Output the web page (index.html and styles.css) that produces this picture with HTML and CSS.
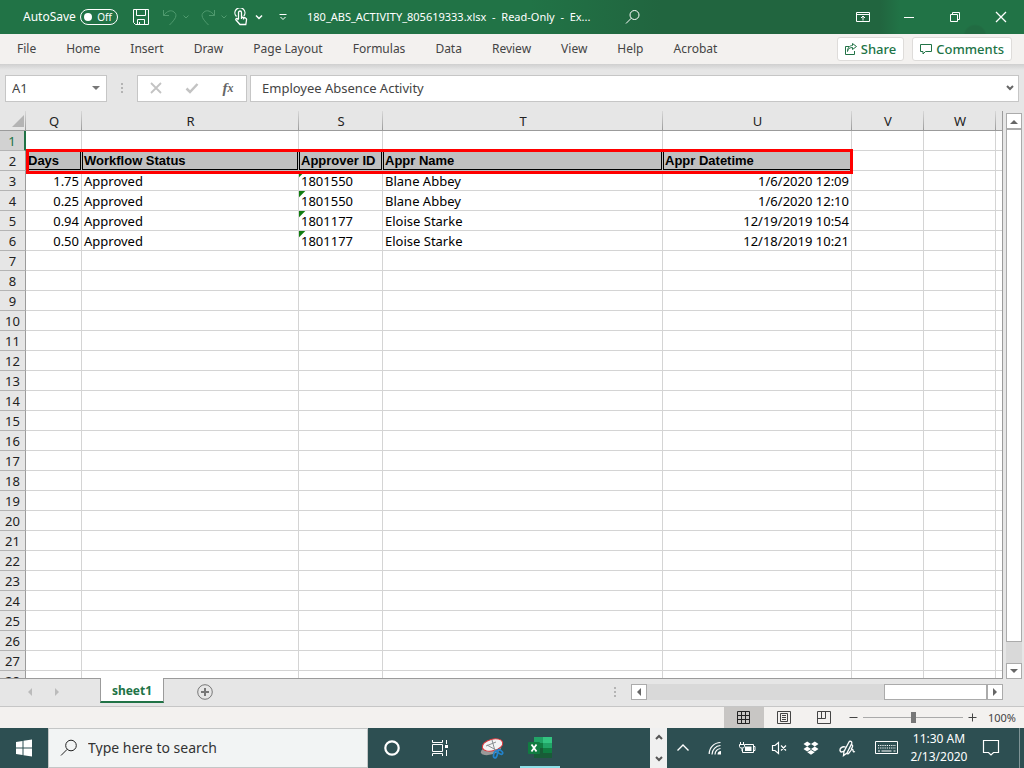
FILE: index.html
```html
<!DOCTYPE html>
<html lang="en">
<head>
<meta charset="utf-8">
<title>180_ABS_ACTIVITY_805619333.xlsx - Read-Only - Excel</title>
<link rel="stylesheet" href="styles.css">
</head>
<body>
<header class="titlebar">
  <span class="autosave-label" id="autosave">AutoSave</span>
  <button class="toggle" role="switch" aria-checked="false" aria-labelledby="autosave"><span class="knob"></span>Off</button>
  <div class="quick">
    <button aria-label="Save"><svg width="18" height="18" viewBox="0 0 18 18"><path d="M1.5 1.5h15v15h-13l-2-2zM4.500 1.500v6h9v-6M5.500 16.500v-5h7v5M7.500 16v-2"/></svg></button>
    <button class="dim" aria-label="Undo"><svg width="16" height="18" viewBox="0 0 16 18"><path d="M1.500 2v5.500h5.500M1.500 7.500C5 3 9 1.500 12 4c4 3 1.500 7-4.500 13"/></svg></button>
    <button class="dim" aria-label="Undo options"><svg width="8" height="6" viewBox="0 0 8 6"><path d="M1.500 1.500L4 4l2.500-2.500"/></svg></button>
    <button class="dim redo" aria-label="Redo"><svg width="16" height="18" viewBox="0 0 16 18"><path d="M14.500 2v5.500H9M14.500 7.500C11 3 7 1.500 4 4c-4 3-1.500 7 4.500 13"/></svg></button>
    <button class="dim" aria-label="Redo options"><svg width="8" height="6" viewBox="0 0 8 6"><path d="M1.500 1.500L4 4l2.500-2.500"/></svg></button>
    <button class="touch" aria-label="Touch mode"><svg width="14" height="18" viewBox="0 0 14 18"><path d="M4.500 11V4.500a1.500 1.500 0 0 1 3 0V9l4 1c1 .3 1.200 1 1 2l-.7 4.500H6L2 12c-.8-1 .6-2 1.500-1.200L4.500 12M2.500 8.500A5 5 0 1 1 9.800 8M9.500 9.500v2M7.500 9v2" stroke-width="1.300"/></svg></button>
    <button class="touch-more" aria-label="Touch mode options"><svg width="8" height="6" viewBox="0 0 8 6"><path d="M1 1.500l3 3 3-3" stroke-width="1.500"/></svg></button>
    <button class="customize" aria-label="Customize toolbar"><svg width="10" height="8" viewBox="0 0 10 8"><path d="M1.500 1.500h7M2.500 4L5 6.500 7.500 4"/></svg></button>
  </div>
  <h1 class="doc">180_ABS_ACTIVITY_805619333.xlsx&nbsp; -&nbsp; Read-Only&nbsp; -&nbsp; Ex...</h1>
  <button class="find" aria-label="Search"><svg width="16" height="16" viewBox="0 0 16 16"><circle cx="9.500" cy="6" r="4.500"/><path d="M6.300 9.200L1 14.500"/></svg></button>
  <div class="window-buttons">
    <button aria-label="Ribbon display options"><svg width="14" height="12" viewBox="0 0 14 12"><path d="M.5 1.500h13v9H.5zM.5 3.500h13M7 9.500V5M5 7l2-2 2 2"/></svg></button>
    <button aria-label="Minimize"><svg width="12" height="12" viewBox="0 0 12 12"><path d="M1 6.500h10"/></svg></button>
    <button aria-label="Restore"><svg width="12" height="12" viewBox="0 0 12 12"><path d="M1.500 3.500h7v7h-7zM3.500 3.500v-2h7v7h-2"/></svg></button>
    <button aria-label="Close"><svg width="12" height="12" viewBox="0 0 12 12"><path d="M1 1l10 10M11 1L1 11" stroke-width="1.300"/></svg></button>
  </div>
</header>

<nav class="ribbon">
  <div class="tabs">
    <button>File</button><button>Home</button><button>Insert</button><button>Draw</button><button>Page Layout</button><button>Formulas</button><button>Data</button><button>Review</button><button>View</button><button>Help</button><button>Acrobat</button>
  </div>
  <button class="action"><svg width="12" height="12" viewBox="0 0 12 12"><path d="M4 3.500H.5v8h9V8M2.500 8.500C3 5.500 5 4.500 7.500 4.500V6.500l4-3-4-3v2C4.500 2.500 2.500 5 2.500 8.500z"/></svg>Share</button>
  <button class="action"><svg width="12" height="12" viewBox="0 0 12 12"><path d="M.5 1.500h11v7h-6l-2.500 2.500V8.500H.5z"/></svg>Comments</button>
</nav>

<section class="formula">
  <div class="namebox"><select aria-label="Name box"><option>A1</option></select><span class="caret"></span></div>
  <svg class="grip" width="4" height="14" viewBox="0 0 4 14"><path d="M1 2h2v2H1zM1 6h2v2H1zM1 10h2v2H1z"/></svg>
  <div class="fx">
    <button aria-label="Cancel"><svg width="14" height="14" viewBox="0 0 14 14"><path d="M2 2l10 10M12 2L2 12" stroke="#c3c3c3" stroke-width="1.800"/></svg></button>
    <button aria-label="Enter"><svg width="14" height="14" viewBox="0 0 14 14"><path d="M1.500 7.500L5 11l7.500-8" stroke="#c3c3c3" stroke-width="2.500"/></svg></button>
    <button class="fn" aria-label="Insert function">f<small>x</small></button>
  </div>
  <div class="entry"><input type="text" value="Employee Absence Activity" aria-label="Formula bar"><svg width="8" height="6" viewBox="0 0 8 6"><path d="M1 1l3 3 3-3" stroke="#666" stroke-width="2"/></svg></div>
</section>

<main class="workspace">
  <div class="sheet" id="sheet">
    <table>
      <colgroup><col class="c-num"><col class="c-q"><col class="c-r"><col class="c-s"><col class="c-t"><col class="c-u"><col class="c-v"><col class="c-v"><col></colgroup>
      <thead><tr><th class="corner"><span></span></th><th>Q</th><th>R</th><th>S</th><th>T</th><th>U</th><th>V</th><th>W</th><th></th></tr></thead>
      <tbody id="rows">
        <tr class="current"><th>1</th><td></td><td></td><td></td><td></td><td></td><td></td><td></td><td></td></tr>
        <tr class="heads"><th>2</th><td>Days</td><td>Workflow Status</td><td>Approver ID</td><td>Appr Name</td><td>Appr Datetime</td><td></td><td></td><td></td></tr>
        <tr><th>3</th><td class="n">1.75</td><td>Approved</td><td class="flag">1801550</td><td>Blane Abbey</td><td class="n">1/6/2020 12:09</td><td></td><td></td><td></td></tr>
        <tr><th>4</th><td class="n">0.25</td><td>Approved</td><td class="flag">1801550</td><td>Blane Abbey</td><td class="n">1/6/2020 12:10</td><td></td><td></td><td></td></tr>
        <tr><th>5</th><td class="n">0.94</td><td>Approved</td><td class="flag">1801177</td><td>Eloise Starke</td><td class="n">12/19/2019 10:54</td><td></td><td></td><td></td></tr>
        <tr><th>6</th><td class="n">0.50</td><td>Approved</td><td class="flag">1801177</td><td>Eloise Starke</td><td class="n">12/18/2019 10:21</td><td></td><td></td><td></td></tr>
      </tbody>
    </table>
    <div class="highlight"></div>
  </div>
  <div class="vscroll">
    <button aria-label="Scroll up"><svg width="8" height="5" viewBox="0 0 8 5"><path d="M0 5l4-4 4 4z"/></svg></button>
    <div class="vtrack"><div class="vthumb"></div></div>
    <button aria-label="Scroll down"><svg width="8" height="5" viewBox="0 0 8 5"><path d="M0 0l4 4 4-4z"/></svg></button>
  </div>
</main>

<section class="sheetbar">
  <div class="sheetnav">
    <button aria-label="Previous sheet"><svg width="5" height="8" viewBox="0 0 5 8"><path d="M5 0L1 4l4 4z"/></svg></button>
    <button aria-label="Next sheet"><svg width="5" height="8" viewBox="0 0 5 8"><path d="M0 0l4 4-4 4z"/></svg></button>
  </div>
  <button class="sheettab">sheet1</button>
  <button class="add" aria-label="New sheet"><svg width="16" height="16" viewBox="0 0 16 16"><circle cx="8" cy="8" r="7.300" stroke="#777"/><path d="M8 4v8M4 8h8" stroke="#777" stroke-width="2"/></svg></button>
  <svg class="grip hgrip" width="4" height="14" viewBox="0 0 4 14"><path d="M1 2h2v2H1zM1 6h2v2H1zM1 10h2v2H1z"/></svg>
  <div class="hscroll">
    <button aria-label="Scroll left"><svg width="5" height="8" viewBox="0 0 5 8"><path d="M5 0L1 4l4 4z"/></svg></button>
    <div class="htrack"><div class="hthumb"></div></div>
    <button aria-label="Scroll right"><svg width="5" height="8" viewBox="0 0 5 8"><path d="M0 0l4 4-4 4z"/></svg></button>
  </div>
</section>

<footer class="status">
  <button class="on" aria-label="Normal view"><svg width="14" height="14" viewBox="0 0 14 14"><path d="M.5.500h12v12H.5zM4.500.500v12M8.500.500v12M.5 4.500h12M.5 8.500h12" stroke="#222"/></svg></button>
  <button aria-label="Page layout view"><svg width="14" height="14" viewBox="0 0 14 14"><path d="M.5.500h13v12H.5zM3.500 2.500h7v8h-7zM5 4.500h4M5 6.500h4M5 8.500h4"/></svg></button>
  <button aria-label="Page break view"><svg width="14" height="14" viewBox="0 0 14 14"><path d="M.5.500h13v12H.5zM4.500.500v7M.5 7.500h8V.5"/></svg></button>
  <button class="step" aria-label="Zoom out"><svg width="9" height="9" viewBox="0 0 9 9"><path d="M.5 4.500h8"/></svg></button>
  <input type="range" min="0" max="200" value="100" aria-label="Zoom">
  <button class="step" aria-label="Zoom in"><svg width="9" height="9" viewBox="0 0 9 9"><path d="M.5 4.500h8M4.500.500v8"/></svg></button>
  <span class="percent">100%</span>
</footer>

<footer class="taskbar">
  <button class="start" aria-label="Start"><svg width="18" height="18" viewBox="0 0 18 18"><path d="M1 3l6.500-1v6.500H1zM8.500 1.800L17 .5v8H8.500zM1 9.500h6.500V16L1 15zM8.500 9.500H17v8l-8.500-1.300z"/></svg></button>
  <label class="search"><svg width="18" height="18" viewBox="0 0 18 18"><circle cx="11" cy="6.500" r="5.300"/><path d="M7.200 10.300L1 16.500"/></svg><input type="text" placeholder="Type here to search" aria-label="Type here to search"></label>
  <div class="apps">
    <button aria-label="Cortana"><svg width="18" height="18" viewBox="0 0 18 18"><circle cx="9" cy="9" r="6.700" stroke-width="2.200"/></svg></button>
    <button aria-label="Task view"><svg width="18" height="18" viewBox="0 0 18 18"><path d="M1.500 1v2.500h10V1M1.500 17v-2.500h10V17M1.500 5.500h10v7h-10zM15.500 1v4M15.500 11v6"/><path d="M14 6h3v3h-3z" fill="#fff" stroke="none"/></svg></button>
    <button class="snip" aria-label="Snipping tool"><svg width="24" height="24" viewBox="0 0 24 24"><ellipse cx="11" cy="14" rx="10.500" ry="4.500" transform="rotate(-15 11 14)" fill="#999" stroke="none"/><ellipse cx="12.500" cy="9" rx="10.500" ry="5.800" transform="rotate(-15 12.500 9)" fill="#f4f4f4" stroke="#d8373c"/><path d="M6 10l10-4M7 9l9 5M12 4l3 11" stroke="#8a8f93"/><g stroke="#2383cc" stroke-width="1.700"><ellipse cx="15.500" cy="18.500" rx="1.800" ry="3.500" transform="rotate(15 15.500 18.500)"/><ellipse cx="20" cy="16" rx="3" ry="1.700" transform="rotate(35 20 16)"/></g></svg></button>
    <button class="excel" aria-label="Excel"><svg width="24" height="22" viewBox="0 0 24 22"><g stroke="none"><path d="M6 0h9v6H6z" fill="#21a366"/><path d="M15 0h9v6h-9z" fill="#33c481"/><path d="M6 6h9v5H6z" fill="#107c41"/><path d="M15 6h9v5h-9z" fill="#21a366"/><path d="M6 11h9v5H6z" fill="#185c37"/><path d="M15 11h9v5h-9z" fill="#107c41"/><path d="M6 16h18v5H6z" fill="#185c37"/><rect y="5" width="12" height="12" rx="1" fill="#107c41"/></g><path d="M3.500 7.500l5 7M8.500 7.500l-5 7" stroke-width="1.800"/></svg></button>
  </div>
  <div class="tasknav">
    <button aria-label="Up"><svg width="8" height="6" viewBox="0 0 8 6"><path d="M1 5l3-3 3 3" stroke="#555" stroke-width="2"/></svg></button>
    <button aria-label="Down"><svg width="8" height="6" viewBox="0 0 8 6"><path d="M1 1l3 3 3-3" stroke="#555" stroke-width="2"/></svg></button>
  </div>
  <div class="tray">
    <button aria-label="Hidden icons"><svg width="14" height="14" viewBox="0 0 14 14"><path d="M1.500 9.500L7 4l5.500 5.500" stroke-width="1.400"/></svg></button>
    <button aria-label="Network"><svg width="14" height="14" viewBox="0 0 14 14"><path d="M1.200 13A11.500 11.500 0 0 1 12.500 1.500M4 13.500A9 9 0 0 1 12.500 4.500M7 13.500A6 6 0 0 1 12.500 7.500" stroke-width="1.200"/><path d="M9.500 13.500a3.500 3.500 0 0 1 3.500-3.500v3.500z" fill="#fff" stroke="none"/></svg></button>
    <button aria-label="Battery"><svg width="18" height="14" viewBox="0 0 18 14"><path d="M7 3.500h8.500v8H4.500V8M15.500 5.500h1.500v4h-1.500M2.500 1v2M5.500 1v2M1.500 3.500h5v2l-1 1.500h-3l-1-1.500zM4 7v3"/><path d="M7 5.500h6.500v4.500H7z" fill="#fff" stroke="none"/></svg></button>
    <button aria-label="Volume muted"><svg width="16" height="14" viewBox="0 0 16 14"><path d="M1.500 4.500H4l3.500-3v11L4 9.500H1.500zM10 4.500l5 5M15 4.500l-5 5" stroke-width="1.200"/></svg></button>
    <button class="fill" aria-label="Dropbox"><svg width="16" height="14" viewBox="0 0 16 14"><path d="M4.200.5L8 3 4.200 5.500.5 3zM11.800.5L15.500 3l-3.700 2.500L8 3zM4.200 5.500L8 8l-3.800 2.500L.5 8zM11.800 5.500L15.500 8l-3.700 2.500L8 8zM8 9l3.700 2.300L8 13.700l-3.700-2.400z"/></svg></button>
    <button class="pen" aria-label="Windows Ink"><svg width="17" height="17" viewBox="0 0 17 17"><path d="M6.500 7C3 6 .7 8.500 1 10.500c.5 2.500 3.500 1.500 5-.5M4.500 15.500l.5-4L10 2c.8-1.500 3.300-.5 2.700 1.500L8 13zM8 13c1 3 3.500-3 5-3.500 2-.5 0 3.500 3 2M12.500 4.500c2 .5 1 3-.5 5" stroke-width="1.300"/></svg></button>
    <button class="keys" aria-label="Touch keyboard"><svg width="24" height="14" viewBox="0 0 24 14"><path d="M.5.500h22v12H.5z"/><path d="M3 4.500h18M3 7h18" stroke-dasharray="1.200 1"/><path d="M3 10h2M6.500 10h10M18.500 10h2"/></svg></button>
  </div>
  <button class="clock"><span>11:30 AM</span><span>2/13/2020</span></button>
  <button class="notes" aria-label="Notifications"><svg width="18" height="18" viewBox="0 0 18 18"><path d="M1.500 1.500h15v12h-5L9 16l-2.500-2.500h-5z" stroke-width="1.200"/></svg></button>
</footer>
<script src="rows.js"></script>
</body>
</html>
```

FILE: styles.css
```css
* { box-sizing: border-box; }
body {
  margin: 0;
  height: 100vh;
  display: flex;
  flex-direction: column;
  overflow: hidden;
  background: #e6e6e6;
  color: #444;
  font: 12px/16px "Noto Sans", "Open Sans", sans-serif;
}
button, input, select {
  font: inherit;
  color: inherit;
  background: none;
  border: 0;
  padding: 0;
  margin: 0;
  border-radius: 0;
  outline: 0;
}
button { display: flex; align-items: center; justify-content: center; flex: none; }
svg { display: block; fill: none; stroke: currentColor; flex: none; }

/* Title bar */
.titlebar {
  flex: none;
  height: 34px;
  display: flex;
  align-items: center;
  padding-left: 23px;
  color: #fff;
  background:
    radial-gradient(circle at 975px 36px, #216b42 10px, transparent 12px),
    linear-gradient(90deg, #217346 530px, #21653f 660px, #21653f 880px, #217346 900px);
}
.autosave-label { width: 57px; white-space: nowrap; font-size: 12px; }
.toggle {
  width: 38px;
  height: 16px;
  border: 1px solid #fff;
  border-radius: 8px;
  justify-content: space-between;
  padding: 0 5px 0 3px;
  font-size: 10px;
}
.knob { width: 8px; height: 8px; border-radius: 50%; background: #fff; }
.quick { display: flex; align-items: center; margin-left: 14px; }
.quick .dim { color: #4f9a6e; margin-left: 4px; }
.quick .dim:nth-child(2) { margin-left: 12px; }
.quick .redo { margin-left: 10px; }
.quick .touch { margin-left: 6px; }
.quick .touch-more { margin-left: 7px; }
.quick .customize { margin-left: 15px; }
.doc { flex: none; margin: 0 0 0 19px; width: 318px; font-size: 11px; font-weight: 400; white-space: nowrap; }
.window-buttons { display: flex; margin-left: auto; }
.window-buttons button { width: 46px; height: 34px; }

/* Ribbon */
.ribbon {
  flex: none;
  height: 30px;
  display: flex;
  align-items: center;
  gap: 8px;
  padding: 0 12px 0 2px;
  background: #f3f1ef;
  font-size: 12px;
}
.tabs { display: flex; flex: 1; }
.tabs button { padding: 0 15px; }
.action {
  height: 24px;
  gap: 4px;
  padding: 0 7px;
  border: 1px solid #dedcda;
  border-radius: 3px;
  background: #fff;
  color: #217346;
  font-size: 13px;
  font-weight: 500;
}

/* Formula bar */
.formula {
  flex: none;
  height: 47px;
  display: flex;
  align-items: center;
  padding: 1px 5px 0;
  background: linear-gradient(#cfcfcf, #e6e6e6 6px);
}
.namebox, .fx, .entry { height: 27px; border: 1px solid #c6c6c6; background: #fff; display: flex; align-items: center; }
.namebox { position: relative; width: 102px; }
.namebox select { appearance: none; width: 100%; height: 100%; padding-left: 6px; font-size: 13px; }
.caret {
  position: absolute;
  right: 6px;
  top: 10px;
  border: 4px solid transparent;
  border-top-color: #777;
  border-bottom: 0;
  pointer-events: none;
}
.grip { margin: 0 13px; fill: #b4b4b4; stroke: none; }
.fx { width: 110px; padding: 0 7px; justify-content: space-between; }
.fx button { width: 22px; }
.fn { font: italic bold 15px "Liberation Serif", serif; color: #666; }
.fn small { font-size: 12px; }
.entry { flex: 1; margin-left: 3px; padding: 0 4px 0 11px; }
.entry input { flex: 1; min-width: 0; font-size: 13px; }

/* Worksheet */
.workspace { flex: 1; min-height: 0; display: flex; }
.sheet { position: relative; flex: 1; min-width: 0; overflow: hidden; background: #fff; border-right: 1px solid #9b9b9b; border-bottom: 1px solid #9b9b9b; }
table { width: 100%; table-layout: fixed; border-collapse: separate; border-spacing: 0; font-size: 13px; line-height: 18px; color: #000; background: #fff; }
.c-num { width: 26px; }
.c-q { width: 56px; }
.c-r { width: 217px; }
.c-s { width: 84px; }
.c-t { width: 280px; }
.c-u { width: 189px; }
.c-v { width: 72px; }
th, td { height: 20px; padding: 0 2px; white-space: nowrap; overflow: hidden; border: 0 solid #d4d4d4; border-width: 0 1px 1px 0; text-align: left; }
th { font-weight: 400; text-align: center; background: #e6e6e6; color: #222; }
thead th { border-bottom-color: #9b9b9b; border-right: 0; background: linear-gradient(#d8d8d8, #9b9b9b) right / 1px 100% no-repeat #e6e6e6; }
tbody th { border-right-color: #9b9b9b; border-bottom-color: #b4b4b4; padding: 0; }
thead th:last-child { background: #e6e6e6; }
.corner span { display: block; margin-left: auto; width: 0; border: 6px solid #b4b4b4; border-top-color: transparent; border-left-color: transparent; }
.current th { background: #d2d2d2; color: #217346; border-right: 2px solid #217346; }
td:last-child { border-right: 0; }
.n { text-align: right; }
.flag { background: linear-gradient(135deg, #107c10 4px, transparent 5px); }
.heads td:nth-child(-n+6) { padding-top: 1px; background: #c0c0c0; border-color: #c0c0c0; box-shadow: inset 0 0 0 1px #000; font: bold 13px/18px "Liberation Sans", sans-serif; }
.highlight { position: absolute; left: 26px; top: 38px; width: 827px; height: 25px; border: 3px solid #f00; }

.vscroll { width: 21px; flex: none; display: flex; flex-direction: column; padding: 2px 2px 0 3px; color: #666; }
.vscroll button, .hscroll button { width: 16px; height: 16px; border: 1px solid #ababab; background: #fff; }
.vscroll button svg, .hscroll button svg { fill: #666; stroke: none; }
.vtrack { flex: 1; background: #d9d9d9; }
.vthumb { height: 96%; background: #fff; border: 1px solid #ababab; }

/* Sheet tabs */
.sheetbar { flex: none; height: 28px; display: flex; align-items: flex-start; padding-right: 21px; border-bottom: 1px solid #c6c6c6; }
.sheetnav { width: 100px; height: 26px; display: flex; align-items: center; gap: 23px; padding-left: 27px; }
.sheetnav svg { fill: #bbb; stroke: none; }
.sheettab {
  width: 64px;
  height: 25px;
  margin-top: -1px;
  padding-top: 3px;
  z-index: 1;
  background: #fff;
  border: 1px solid #9b9b9b;
  border-width: 0 1px 2px;
  border-bottom-color: #217346;
  color: #217346;
  font-weight: 700;
}
.add { margin: 5px auto 0 33px; }
.hgrip { margin-top: 6px; margin-right: 14px; }
.hscroll { display: flex; width: 37.1%; height: 16px; margin-top: 5px; }
.htrack { flex: 1; display: flex; justify-content: flex-end; background: #d9d9d9; }
.hthumb { width: 30.4%; background: #fff; border: 1px solid #ababab; }

/* Status bar */
.status { flex: none; height: 21px; display: flex; align-items: center; justify-content: flex-end; padding-right: 8px; background: #f3f1ef; font-size: 11px; }
.status button { width: 40px; height: 21px; }
.status .on { background: #c8c6c4; }
.status .step { width: 19px; }
.status input { appearance: none; width: 100px; height: 20px; background: linear-gradient(#aaa, #aaa) center / 100% 1px no-repeat; }
.status input::-webkit-slider-thumb { appearance: none; width: 5px; height: 11px; background: #777; }
.percent { width: 34px; text-align: right; white-space: nowrap; }

/* Taskbar */
.taskbar { flex: none; height: 40px; display: flex; background: #2d4f52; color: #fff; }
.start { width: 48px; }
.start svg, .fill svg { fill: #fff; stroke: none; }
.search { width: 320px; display: flex; align-items: center; gap: 10px; padding-left: 11px; background: #f2f4f4; border: 1px solid #c4c6c6; color: #222; font-size: 14px; }
.search input { flex: 1; min-width: 0; }
.search input::placeholder { color: #333; opacity: 1; }
.apps { display: flex; flex: 1; }
.apps button { width: 48px; }
.apps .snip { width: 56px; }
.apps .excel { width: 40px; border-bottom: 2px solid #8fe0e8; padding-top: 2px; }
.tasknav { width: 17px; display: flex; flex-direction: column; justify-content: space-between; background: #f0f0f0; }
.tasknav button { height: 18px; }
.tray { display: flex; }
.tray button { width: 32px; }
.tray .pen { width: 40px; }
.tray .keys { width: 40px; }
.clock { width: 64px; flex-direction: column; line-height: 18px; font-size: 12px; }
.notes { width: 49px; padding-right: 9px; border-right: 1px solid #7f9496; margin-right: 4px; }
```

FILE: rows.js
```js
const sheet = document.getElementById("sheet");
const body = document.getElementById("rows");

function fillRows() {
  const wanted = Math.ceil(sheet.clientHeight / 20) - 1;
  for (let n = body.rows.length + 1; n <= wanted; n++) {
    const row = body.insertRow();
    const head = document.createElement("th");
    head.textContent = n;
    row.append(head);
    for (let c = 0; c < 8; c++) row.insertCell();
  }
}

fillRows();
window.addEventListener("resize", fillRows);
```
